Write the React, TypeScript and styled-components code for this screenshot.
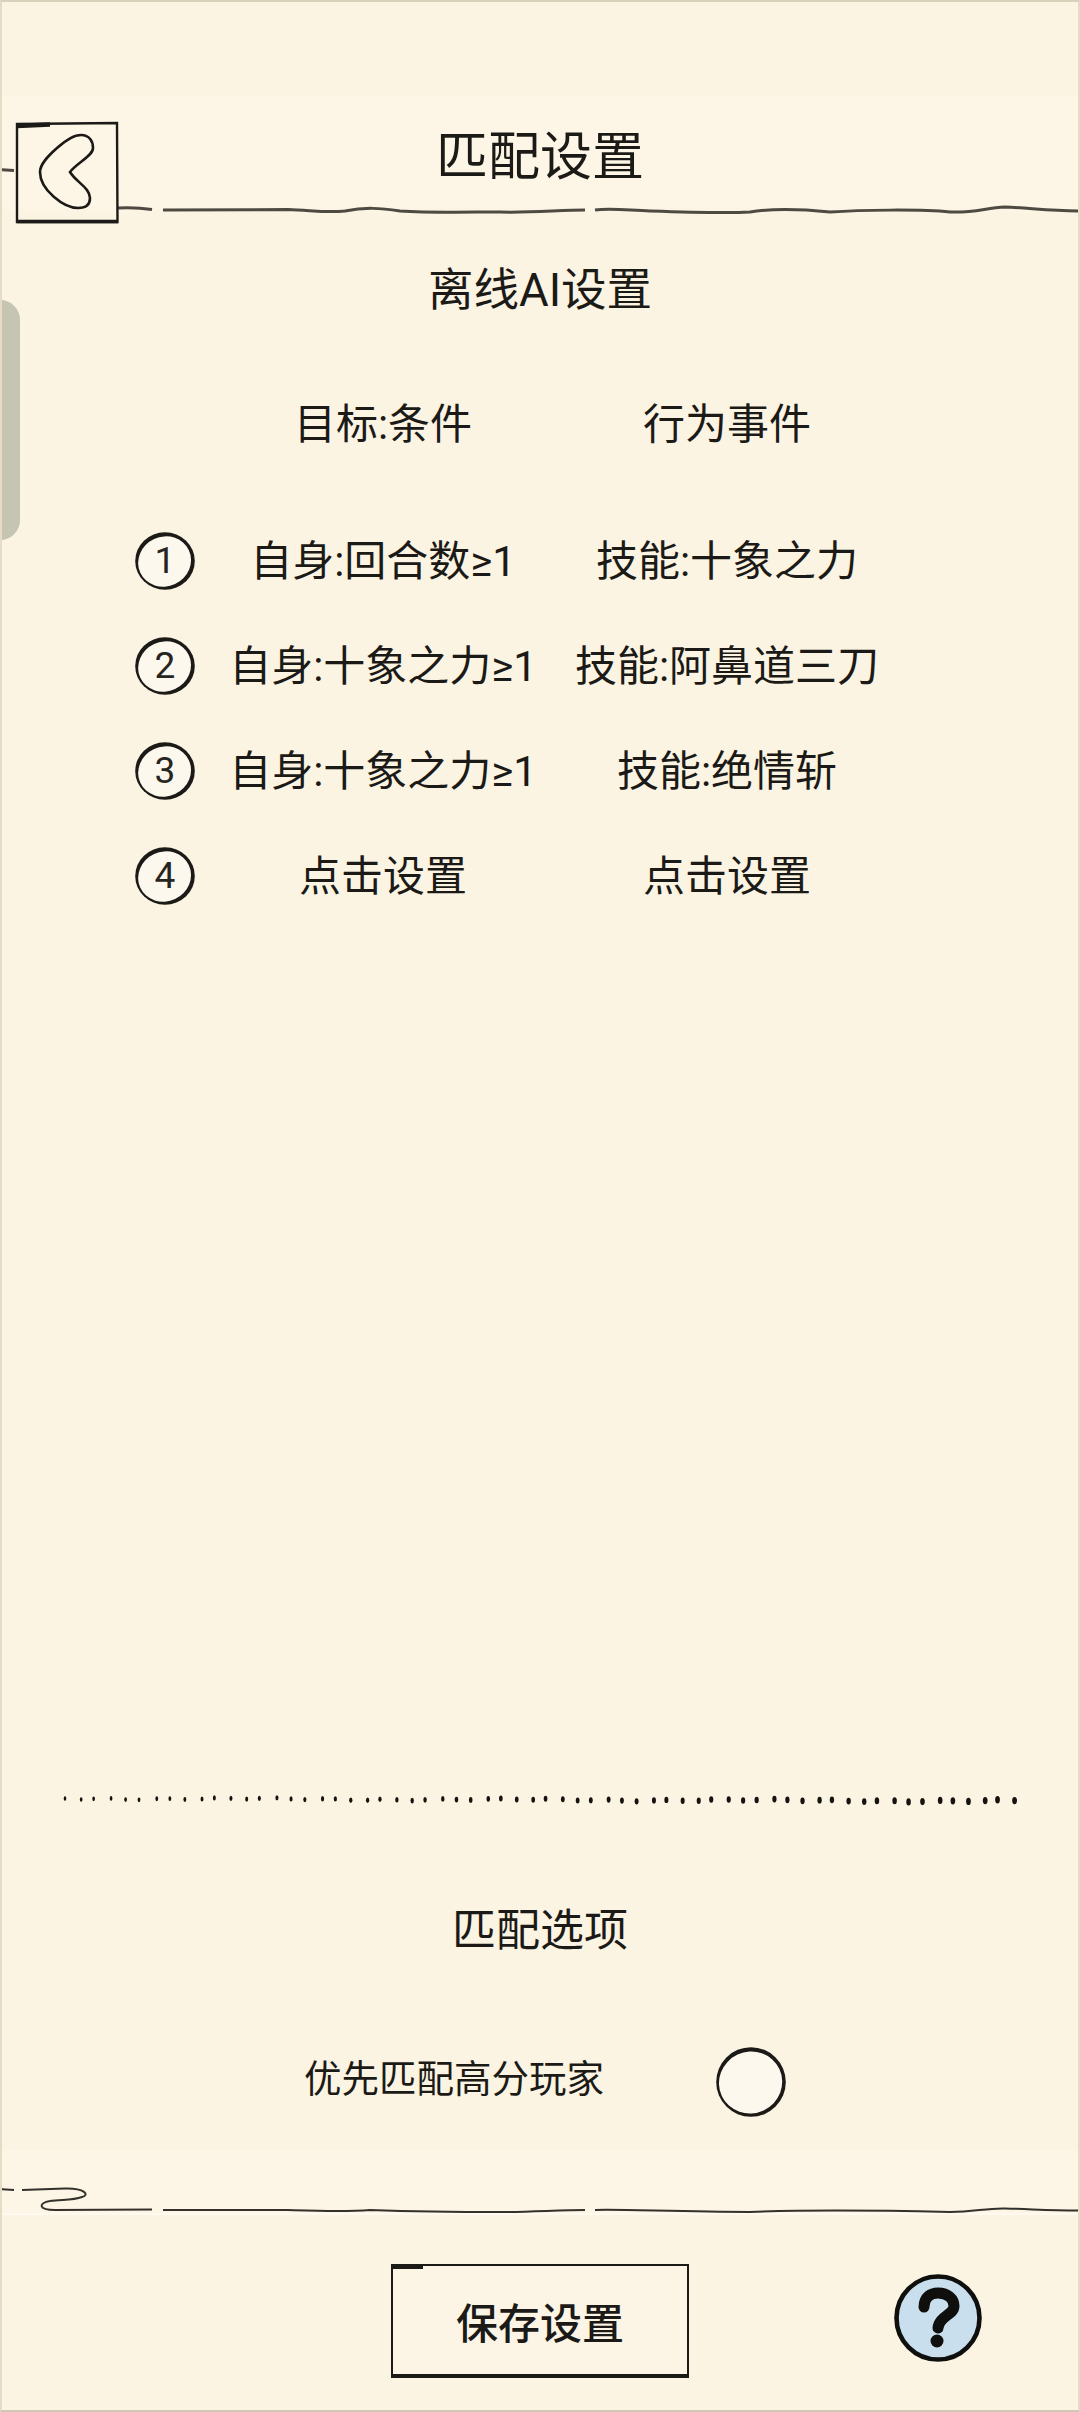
import React from "react";
import styled, { createGlobalStyle } from "styled-components";

const GlobalStyle = createGlobalStyle`
  html, body { margin: 0; padding: 0; background: #fcf4e3; }
  * { box-sizing: border-box; }
`;

const INK = "#1b1a17";
const FONT = `Roboto, "Noto Sans CJK SC", "Noto Sans", sans-serif`;
const BAND = "#fdf5e5";

const Page = styled.main`
  position: relative;
  width: 1080px;
  height: 2412px;
  display: flex;
  flex-direction: column;
  padding-top: 94px;
  background: #fcf4e3;
  color: ${INK};
  font-family: ${FONT};
  overflow: hidden;
  border-top: 2px solid #d8d1bc;
  border-left: 2px solid #e6dcc5;
  border-right: 2px solid #e6dcc5;
  border-bottom: 2px solid #cfc8b4;
`;

const ScrollTab = styled.div`
  position: absolute;
  left: -2px;
  top: 298px;
  width: 20px;
  height: 240px;
  background: #c6c5b4;
  border-radius: 0 20px 20px 0;
`;

const Header = styled.header`
  display: grid;
  height: 128px;
  margin: 0 -2px;
  padding-top: 4px;
  background: linear-gradient(${BAND} 0 86%, transparent 92%);
  & > * { grid-area: 1 / 1; }
`;

const Title = styled.h1`
  margin: 23px 0 0;
  justify-self: center;
  align-self: start;
  font-size: 52px;
  line-height: 70px;
  font-weight: 400;
`;

const BackButton = styled.button`
  justify-self: start;
  align-self: end;
  width: 105px;
  height: 103px;
  margin: 0 0 0 15px;
  padding: 0;
  border: 0;
  background: none;
  line-height: 0;
  & svg { display: block; }
`;

const RuleArt = styled.svg`
  display: block;
  width: 1080px;
  pointer-events: none;
`;

const SectionHeading = styled.h2`
  margin: 37px 0 0;
  text-align: center;
  font-size: 45.5px;
  line-height: 60px;
  font-weight: 400;
`;

const ColumnGrid = styled.div`
  display: grid;
  grid-template-columns: 60px 346px 312px;
  column-gap: 15px;
  padding-left: 133px;
  & > * { min-width: 0; }
`;

const TableHead = styled(ColumnGrid)`
  margin-top: 72px;
  height: 60px;
  align-items: center;
  font-size: 42px;
  line-height: 60px;
  text-align: center;
`;

const TableRow = styled(ColumnGrid)`
  height: 105px;
  align-items: center;
  font-size: 42px;
  line-height: 60px;
  text-align: center;
`;

const Rows = styled.div`
  margin-top: 55px;
`;

const Cell = styled.span`
  white-space: nowrap;
  padding-top: 2px;
`;

const Badge = styled.span`
  position: relative;
  width: 60px;
  height: 58px;
  display: flex;
  align-items: center;
  justify-content: center;
  font-size: 37px;
  color: #26251f;
  & svg { position: absolute; inset: 0; }
  & b { position: relative; font-weight: 400; line-height: 1; }
`;

const Options = styled.section`
  margin-top: auto;
  display: flex;
  flex-direction: column;
  padding-bottom: 33px;
`;

const DotLine = styled.svg`
  display: block;
  width: 1080px;
  height: 20px;
  margin-left: -2px;
`;

const OptionsHeading = styled.h2`
  margin: 91px 0 0;
  text-align: center;
  font-size: 44px;
  line-height: 60px;
  font-weight: 400;
`;

const OptionRow = styled.div`
  margin-top: 86px;
  height: 70px;
  display: flex;
  align-items: center;
  padding-left: 302px;
`;

const OptionLabel = styled.span`
  width: 412px;
  font-size: 37.5px;
  line-height: 50px;
  margin-bottom: 6px;
`;

const Radio = styled.span`
  width: 70px;
  height: 70px;
  & svg { display: block; }
`;

const FooterBand = styled.div`
  height: 65px;
  margin: 0 -2px;
  display: flex;
  align-items: flex-end;
  background: ${BAND};
  border-bottom: 2px solid #fffaf0;
`;

const Footer = styled.footer`
  display: grid;
  grid-template-columns: 1fr auto 1fr;
  align-items: start;
  padding-top: 49px;
  height: 195px;
  flex: none;
`;

const SaveButton = styled.button`
  grid-column: 2;
  position: relative;
  width: 298px;
  height: 114px;
  padding: 0;
  background: #fcf5e6;
  border: solid ${INK};
  border-width: 2px 2px 4px 2px;
  color: ${INK};
  font-family: ${FONT};
  font-size: 42px;
  font-weight: 500;
  &::before {
    content: "";
    position: absolute;
    left: 0;
    top: 0;
    width: 30px;
    height: 3px;
    background: ${INK};
  }
`;

const HelpButton = styled.button`
  width: 90px;
  height: 90px;
  margin: 9px 0 0 204px;
  padding: 0;
  border: 0;
  background: none;
  & svg { display: block; }
`;

function SketchRing({ w, h, fill }: { w: number; h: number; fill: string }) {
  const cx = w / 2;
  const cy = h / 2;
  return (
    <svg width={w} height={h} viewBox={`0 0 ${w} ${h}`} aria-hidden="true">
      <ellipse cx={cx} cy={cy} rx={cx - 0.2} ry={cy - 0.2} fill={INK} />
      <ellipse cx={cx - 0.6} cy={cy + 0.3} rx={cx - 3.2} ry={cy - 4.2} fill={fill} transform={`rotate(-25 ${cx} ${cy})`} />
    </svg>
  );
}

const dots = Array.from({ length: 64 }, (_, i) => {
  const t = i / 63;
  const wobble = Math.sin(i * 1.7) * 1.2 + Math.sin(i * 0.37);
  return {
    x: 65 + t * 949 + Math.sin(i * 2.3) * 1.5,
    y: 8.5 + t * 2.5 + wobble * 0.6,
    rx: 1.3 + t * 1.1,
    ry: 2.3 + t * 1.4,
  };
});

const rows = [
  ["1", "自身:回合数≥1", "技能:十象之力"],
  ["2", "自身:十象之力≥1", "技能:阿鼻道三刀"],
  ["3", "自身:十象之力≥1", "技能:绝情斩"],
  ["4", "点击设置", "点击设置"],
];

export default function App() {
  return (
    <>
      <GlobalStyle />
      <Page>
        <ScrollTab />
        <Header>
          <RuleArt viewBox="0 100 1080 124" height={124} aria-hidden="true" fill="none" stroke="#4e4a42" strokeWidth={3}>
            <path d="M0 169.5 L14 170.5" />
            <path d="M118 208 Q135 207 152 209.5" />
            <path d="M163 210 L288 209.5 C310 210 325 213 345 211 C365 207 380 208 400 211 C430 213 470 212 500 212 C530 213 560 210 585 210" />
            <path d="M595 210 C610 208 625 210 650 211 C680 212 730 213 750 212 C775 208 800 209 830 212 C860 210 920 209 950 212 C975 213 985 208 1005 207 C1030 208 1050 211 1080 211" />
          </RuleArt>
          <BackButton aria-label="返回">
            <svg width={105} height={103} viewBox="15 121 105 103" fill="none" stroke={INK}>
              <path d="M17 124 L117 123 L117.5 222 L17 222 Z" strokeWidth={2.4} />
              <path d="M17 126 L50 124.5" strokeWidth={4.5} />
              <path d="M17 221.5 L118 221.5" strokeWidth={3.4} />
              <path d="M57 148 C66 140 74 135 81 135 C90 135 93 142 93 148 C93 156 78 162 70 172 C76 182 90 188 90 198 C90 205 85 208 78 208 C64 208 40 190 40 172 C40 164 48 156 57 148 Z" strokeWidth={2.6} />
            </svg>
          </BackButton>
          <Title>匹配设置</Title>
        </Header>

        <SectionHeading>离线AI设置</SectionHeading>

        <TableHead>
          <span />
          <Cell>目标:条件</Cell>
          <Cell>行为事件</Cell>
        </TableHead>

        <Rows>
          {rows.map(([n, cond, action]) => (
            <TableRow key={n}>
              <Badge>
                <SketchRing w={60} h={58} fill="#fdf8ee" />
                <b>{n}</b>
              </Badge>
              <Cell>{cond}</Cell>
              <Cell>{action}</Cell>
            </TableRow>
          ))}
        </Rows>

        <Options>
          <DotLine viewBox="0 0 1080 20" aria-hidden="true">
            {dots.map((d, i) => (
              <ellipse key={i} cx={d.x} cy={d.y} rx={d.rx} ry={d.ry} fill="#14130f" />
            ))}
          </DotLine>
          <OptionsHeading>匹配选项</OptionsHeading>
          <OptionRow>
            <OptionLabel>优先匹配高分玩家</OptionLabel>
            <Radio>
              <SketchRing w={70} h={70} fill="#fdf8ee" />
            </Radio>
          </OptionRow>
        </Options>

        <FooterBand>
          <RuleArt viewBox="0 2180 1080 33" height={33} aria-hidden="true" fill="none" stroke="#33312b" strokeWidth={2}>
            <path d="M0 2189 L14 2190" />
            <path d="M22 2190 L65 2188.5 C85 2188 90 2195 82 2197 C72 2201 60 2199 50 2201 C38 2203 38 2210 55 2210 L152 2209.5" />
            <path d="M163 2210 L288 2210 C320 2211 345 2212 370 2210 C400 2211 470 2212 500 2212 C530 2212 560 2210 585 2210" />
            <path d="M595 2210 C620 2209 680 2212 750 2212 C800 2210 860 2210 950 2212 C975 2212 985 2208 1005 2208.5 C1030 2209 1050 2210.5 1080 2210.5" />
          </RuleArt>
        </FooterBand>

        <Footer>
          <SaveButton>保存设置</SaveButton>
          <HelpButton aria-label="帮助">
            <svg width={90} height={90} viewBox="-45 -45 90 90">
              <circle cx={0} cy={0} r={41.5} fill="#c9dfee" stroke="#0f0f0d" strokeWidth={4.6} />
              <path d="M-14 -11 C-14 -21 -7 -25 0 -25 C10 -25 16 -19 16 -12 C16 -3 1 -2 0 10" fill="none" stroke="#0f0f0d" strokeWidth={11} strokeLinecap="round" />
              <circle cx={-1} cy={23} r={6.5} fill="#0f0f0d" />
            </svg>
          </HelpButton>
        </Footer>
      </Page>
    </>
  );
}
